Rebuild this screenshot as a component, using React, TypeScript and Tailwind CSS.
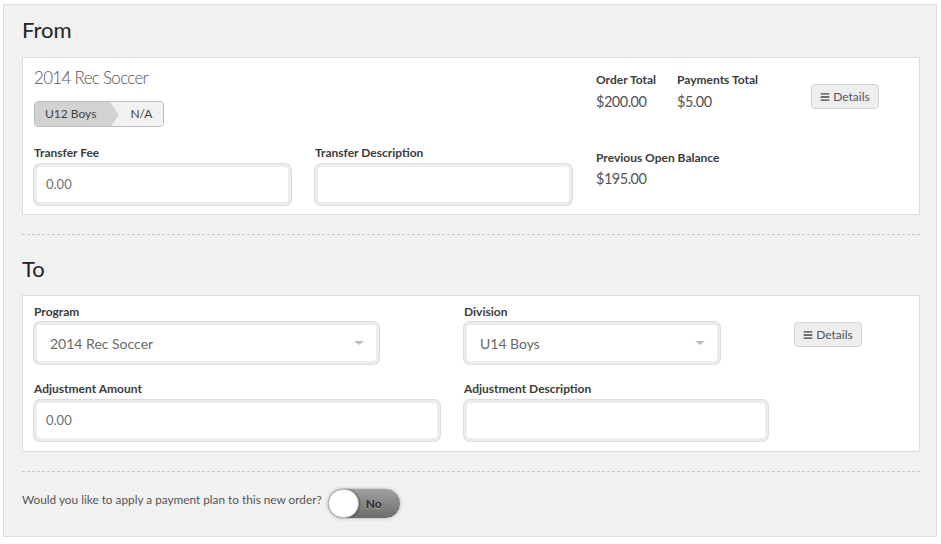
import { FaBars } from "react-icons/fa";

const font = { fontFamily: "Lato, 'Open Sans', sans-serif" };

function Label({ children }: { children: React.ReactNode }) {
  return (
    <div className="text-[12px] leading-4 font-bold text-[#3b3b3b]">
      {children}
    </div>
  );
}

function TextBox({ value, className }: { value?: string; className: string }) {
  return (
    <div
      className={`h-[41px] rounded-[6px] border-[3px] border-[#ececec] bg-white shadow-[0_0_0_1px_#dcdcdc] flex items-center px-[9px] text-[13px] text-[#707070] ${className}`}
    >
      {value}
    </div>
  );
}

function SelectBox({ value, className }: { value: string; className: string }) {
  return (
    <div
      className={`h-[42px] rounded-[6px] border-[3px] border-[#ececec] bg-white shadow-[0_0_0_1px_#dcdcdc] flex items-center justify-between pl-[13px] pr-[12px] text-[14px] text-[#6a6a6a] ${className}`}
    >
      <span>{value}</span>
      <span className="w-0 h-0 border-l-[5px] border-r-[5px] border-t-[4px] border-l-transparent border-r-transparent border-t-[#bdbdbd]" />
    </div>
  );
}

function DetailsButton() {
  return (
    <button className="h-[25px] w-[68px] rounded-[4px] border border-[#d4d4d4] bg-[#eeeeee] flex items-center justify-center gap-[3px] text-[12px] text-[#555]">
      <FaBars className="text-[10px] text-[#444]" />
      Details
    </button>
  );
}

function Money({ label, value }: { label: string; value: string }) {
  return (
    <div>
      <Label>{label}</Label>
      <div className="mt-1 text-[14.5px] leading-5 text-[#555] tracking-[-0.5px]">
        {value}
      </div>
    </div>
  );
}

export default function App() {
  return (
    <div className="w-[941px] h-[544px] bg-white pt-[4px] pl-[3px]" style={font}>
      <div className="w-[934px] h-[533px] bg-[#f2f1f1] border border-[#dedede] pl-[18px] pt-[11px]">
        <h1 className="text-[22px] leading-7 text-[#222] mb-[13px]">From</h1>

        <div className="w-[898px] bg-white border border-[#dcdcdc] pl-[11px] pt-[8px] pb-[9px] flex gap-6">
          <div className="w-[538px]">
            <div className="text-[17px] leading-6 font-light text-[#555] tracking-[-0.7px]">
              2014 Rec Soccer
            </div>
            <div className="mt-[11px] inline-flex h-[26px] rounded-[4px] border border-[#bcbcbc] overflow-hidden text-[12px] text-[#444]">
              <div className="relative bg-[#d2d2d2] pl-[10px] pr-[14px] flex items-center">
                U12 Boys
                <span className="absolute -right-[9px] top-0 w-0 h-0 border-t-[13px] border-b-[13px] border-l-[9px] border-t-transparent border-b-transparent border-l-[#d2d2d2] z-10" />
              </div>
              <div className="bg-[#f1f1f1] pl-[20px] pr-[11px] flex items-center">N/A</div>
            </div>
            <div className="mt-[18px] grid grid-cols-2 gap-6">
              <div>
                <Label>Transfer Fee</Label>
                <TextBox value="0.00" className="mt-[3px] w-[257px]" />
              </div>
              <div>
                <Label>Transfer Description</Label>
                <TextBox className="mt-[3px] w-[257px]" />
              </div>
            </div>
          </div>

          <div className="pt-[6px]">
            <div className="flex">
              <div className="w-[81px]">
                <Money label="Order Total" value="$200.00" />
              </div>
              <div className="w-[134px]">
                <Money label="Payments Total" value="$5.00" />
              </div>
              <div className="mt-[12px]">
                <DetailsButton />
              </div>
            </div>
            <div className="mt-[38px]">
              <Label>Previous Open Balance</Label>
              <div className="mt-[3px] text-[14.5px] leading-5 text-[#555] tracking-[-0.5px]">
                $195.00
              </div>
            </div>
          </div>
        </div>

        <div className="w-[898px] mt-[19px] border-t border-dashed border-[#c8c8c8]" />

        <h1 className="text-[22px] leading-7 text-[#222] mt-[20px] mb-[12px]">To</h1>

        <div className="w-[898px] bg-white border border-[#dcdcdc] pl-[11px] pt-[8px] pb-[10px]">
          <div className="flex">
            <div className="w-[430px]">
              <Label>Program</Label>
              <SelectBox value="2014 Rec Soccer" className="mt-[2px] w-[345px]" />
            </div>
            <div className="w-[330px]">
              <Label>Division</Label>
              <SelectBox value="U14 Boys" className="mt-[2px] w-[256px]" />
            </div>
            <div className="pt-[18px]">
              <DetailsButton />
            </div>
          </div>
          <div className="flex mt-[17px]">
            <div className="w-[430px]">
              <Label>Adjustment Amount</Label>
              <TextBox value="0.00" className="mt-[3px] w-[406px]" />
            </div>
            <div>
              <Label>Adjustment Description</Label>
              <TextBox className="mt-[3px] w-[304px]" />
            </div>
          </div>
        </div>

        <div className="w-[898px] mt-[19px] border-t border-dashed border-[#c8c8c8]" />

        <div className="mt-[16px] flex items-center gap-[5px]">
          <span className="text-[11.8px] text-[#555] -mt-[8px]">
            Would you like to apply a payment plan to this new order?
          </span>
          <div className="relative w-[74px] h-[31px] rounded-full border border-[#d0d0d0] bg-gradient-to-b from-[#a2a2a2] to-[#6c6c6c] shadow-[0_0_0_2px_#e8e8e8] flex items-center">
            <div className="absolute left-0 top-0 w-[31px] h-[29px] rounded-full bg-white border border-[#bdbdbd] shadow-[1px_0_2px_rgba(0,0,0,0.35)]" />
            <span className="ml-[38px] text-[12px] font-bold text-[#2a2a2a] [text-shadow:0_1px_0_rgba(255,255,255,0.35)]">
              No
            </span>
          </div>
        </div>
      </div>
    </div>
  );
}
